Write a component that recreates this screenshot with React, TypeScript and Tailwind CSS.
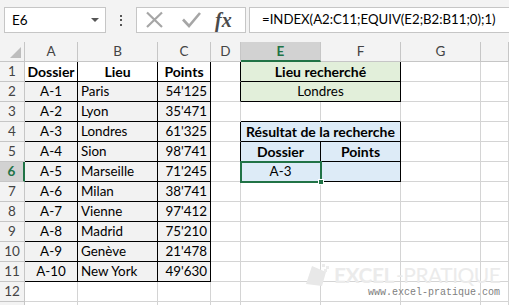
import React from "react";

type CellProps = {
  children?: React.ReactNode;
  className?: string;
};

// Plain sheet cell: gridline on right and bottom, colour overridden per cell
const Cell: React.FC<CellProps> = ({ children, className = "" }) => (
  <div
    className={`flex h-5 items-center overflow-hidden whitespace-nowrap border-r border-b px-[3px] text-[13.4px] leading-none text-black ${className}`}
  >
    {children}
  </div>
);

const RowHead: React.FC<{ n?: number; active?: boolean }> = ({ n, active }) =>
  active ? (
    <div className="flex h-5 items-center justify-center border-b border-b-[#c6c6c6] border-r-2 border-r-[#217346] bg-[#d2d2d2] text-[13.5px] font-bold text-[#217346]">
      {n}
    </div>
  ) : (
    <div className="flex h-5 items-center justify-center border-r border-b border-[#c6c6c6] bg-[#f3f3f3] text-[13.5px] text-[#444]">
      {n}
    </div>
  );

const ColHead: React.FC<{ l: string; active?: boolean }> = ({ l, active }) =>
  active ? (
    <div className="flex h-5 items-center justify-center border-r border-r-[#c6c6c6] border-b-2 border-b-[#217346] bg-[#d2d2d2] text-[13.5px] font-bold text-[#217346]">
      {l}
    </div>
  ) : (
    <div className="flex h-5 items-center justify-center border-r border-b border-[#c6c6c6] bg-[#f3f3f3] text-[13.5px] text-[#444]">
      {l}
    </div>
  );

const rows = [
  ["A-1", "Paris", "54'125"],
  ["A-2", "Lyon", "35'471"],
  ["A-3", "Londres", "61'325"],
  ["A-4", "Sion", "98'741"],
  ["A-5", "Marseille", "71'245"],
  ["A-6", "Milan", "38'741"],
  ["A-7", "Vienne", "97'412"],
  ["A-8", "Madrid", "75'210"],
  ["A-9", "Genève", "21'478"],
  ["A-10", "New York", "49'630"],
];

const grid = "border-[#d4d4d4]";
const blk = "border-black";
const bold = "font-bold text-[14px]";

export default function App() {
  // right-hand block (D..H) per data row index 1..13
  const right = (r: number) => {
    if (r === 1)
      return (
        <>
          <Cell className="border-r-black border-b-[#d4d4d4]" />
          <Cell className={`col-span-2 justify-center bg-[#e2efda] ${bold} ${blk}`}>Lieu recherché</Cell>
          <Cell className={grid} />
          <Cell className={grid} />
        </>
      );
    if (r === 2)
      return (
        <>
          <Cell className="border-r-black border-b-[#d4d4d4]" />
          <Cell className={`col-span-2 justify-center bg-[#e2efda] ${blk}`}>Londres</Cell>
          <Cell className={grid} />
          <Cell className={grid} />
        </>
      );
    if (r === 3)
      return (
        <>
          <Cell className={grid} />
          <Cell className="border-r-[#d4d4d4] border-b-black" />
          <Cell className="border-r-[#d4d4d4] border-b-black" />
          <Cell className={grid} />
          <Cell className={grid} />
        </>
      );
    if (r === 4)
      return (
        <>
          <Cell className="border-r-black border-b-[#d4d4d4]" />
          <Cell className={`col-span-2 justify-center bg-[#ddebf7] ${bold} ${blk}`}>Résultat de la recherche</Cell>
          <Cell className={grid} />
          <Cell className={grid} />
        </>
      );
    if (r === 5)
      return (
        <>
          <Cell className="border-r-black border-b-[#d4d4d4]" />
          <Cell className={`justify-center bg-[#ddebf7] ${bold} ${blk}`}>Dossier</Cell>
          <Cell className={`justify-center bg-[#ddebf7] ${bold} ${blk}`}>Points</Cell>
          <Cell className={grid} />
          <Cell className={grid} />
        </>
      );
    if (r === 6)
      return (
        <>
          <Cell className="border-r-black border-b-[#d4d4d4]" />
          <div className="relative">
            <Cell className={`justify-center bg-[#ddebf7] ${blk}`}>A-3</Cell>
            <div className="pointer-events-none absolute -top-[1px] -left-[1px] h-[22px] w-[82px] border-2 border-[#217346]" />
            <div className="absolute -right-[3px] -bottom-[3px] h-[6px] w-[6px] border border-white bg-[#217346]" />
          </div>
          <Cell className={`bg-[#ddebf7] ${blk}`} />
          <Cell className={grid} />
          <Cell className={grid} />
        </>
      );
    return (
      <>
        <Cell className={grid} />
        <Cell className={grid} />
        <Cell className={grid} />
        <Cell className={grid} />
        <Cell className={grid} />
      </>
    );
  };

  return (
    <div className="relative h-[305px] w-[509px] overflow-hidden bg-white font-['Lato','Liberation_Sans',sans-serif]">
      {/* Formula bar */}
      <div className="flex h-[42px] items-start bg-[#f3f3f3] pt-[7px] pl-1">
        <div className="flex h-[26px] w-[102px] items-center justify-between border border-[#c6c6c6] bg-white pr-[6px] pl-[7px] text-[13.5px] text-black">
          <span>E6</span>
          <svg width="8" height="4" viewBox="0 0 8 4">
            <path d="M0 0H8L4 4Z" fill="#555" />
          </svg>
        </div>
        <div className="flex h-[26px] w-[30px] flex-col items-center justify-center gap-[2.5px]">
          <span className="h-[2px] w-[2px] bg-[#555]" />
          <span className="h-[2px] w-[2px] bg-[#555]" />
          <span className="h-[2px] w-[2px] bg-[#555]" />
        </div>
        <div className="flex h-[26px] w-[110px] items-center border border-[#c6c6c6] bg-white">
          <svg width="78" height="24" viewBox="0 0 78 24" className="shrink-0">
            <path d="M10 4.5L25 19M25 4.5L10 19" stroke="#a6a6a6" strokeWidth="2.2" fill="none" />
            <path d="M46 11.5L52 18L63 5" stroke="#a6a6a6" strokeWidth="2.6" fill="none" />
          </svg>
          <span className="font-['Liberation_Serif',serif] text-[20px] leading-none font-bold italic text-[#4a4a4a]">
            fx
          </span>
        </div>
        <div className="ml-[3px] flex h-[26px] flex-1 items-center border border-r-0 border-[#c6c6c6] bg-white pl-3 text-[13.2px] text-black">
          =INDEX(A2:C11;EQUIV(E2;B2:B11;0);1)
        </div>
      </div>

      {/* Sheet */}
      <div className="grid grid-cols-[25px_53px_80px_53px_30px_80px_80px_80px_1fr]">
        <div className="flex h-5 items-end justify-end border-r border-b border-[#c6c6c6] bg-[#f3f3f3] p-[3px]">
          <svg width="11" height="11" viewBox="0 0 11 11">
            <path d="M11 0V11H0Z" fill="#bdbdbd" />
          </svg>
        </div>
        {["A", "B", "C", "D"].map((l) => (
          <ColHead key={l} l={l} />
        ))}
        <ColHead l="E" active />
        <ColHead l="F" />
        <ColHead l="G" />
        <ColHead l="" />

        {/* Row 1 */}
        <RowHead n={1} />
        <Cell className={`justify-center ${bold} ${blk}`}>Dossier</Cell>
        <Cell className={`justify-center ${bold} ${blk}`}>Lieu</Cell>
        <Cell className={`justify-center ${bold} ${blk}`}>Points</Cell>
        {right(1)}

        {rows.map((r, i) => (
          <React.Fragment key={r[0]}>
            <RowHead n={i + 2} active={i + 2 === 6} />
            <Cell className={`justify-center bg-[#f2f2f2] ${blk}`}>{r[0]}</Cell>
            <Cell className={`bg-[#f2f2f2] ${blk}`}>{r[1]}</Cell>
            <Cell className={`justify-end bg-[#f2f2f2] ${blk}`}>{r[2]}</Cell>
            {right(i + 2)}
          </React.Fragment>
        ))}

        {/* Row 12 and the sliver of 13 */}
        <RowHead n={12} />
        <Cell className={grid} />
        <Cell className={grid} />
        <Cell className={grid} />
        {right(12)}
        <RowHead />
        <Cell className={grid} />
        <Cell className={grid} />
        <Cell className={grid} />
        {right(13)}
      </div>

      {/* Watermark */}
      <div className="pointer-events-none absolute top-[262px] left-[302px] flex items-center gap-[2px]">
        <svg width="30" height="24" viewBox="0 0 30 24">
          <path d="M4 22L10 4L24 10L20 24Z" fill="#e8e8e8" />
          <path d="M20 2h3v3h-3zM24 4h3v3h-3zM22 7h3v3h-3z" fill="#ececec" />
        </svg>
        <span className="text-[21px] leading-none font-bold tracking-[-0.5px] text-[#ebebeb]">EXCEL</span>
        <span className="text-[21px] leading-none tracking-[-0.5px] text-[#ebebeb]">-PRATIQUE</span>
      </div>
      <div className="pointer-events-none absolute top-[288px] left-[368px] font-['Liberation_Mono',monospace] text-[10px] leading-none text-[#808080]">
        www.excel-pratique.com
      </div>
    </div>
  );
}
